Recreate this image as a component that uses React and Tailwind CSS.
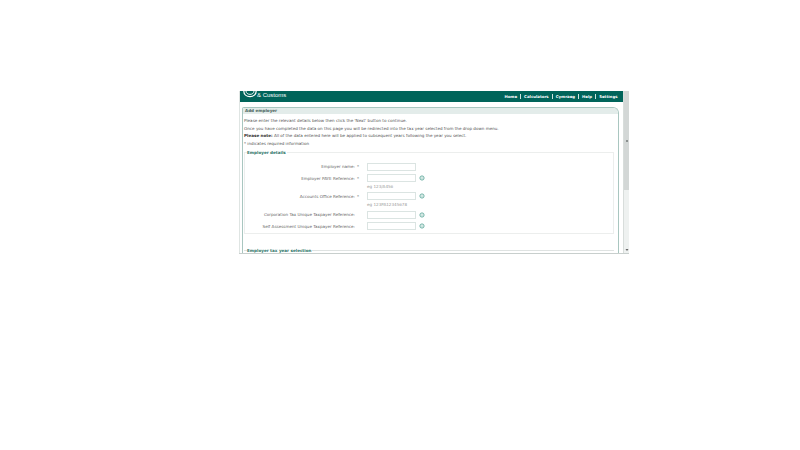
const fields = [
  { label: "Employer name:", required: true, help: false, h: "h-[11.5px]" },
  { label: "Employer PAYE Reference:", required: true, help: true, hint: "eg 123/A456", h: "h-[18px]" },
  { label: "Accounts Office Reference:", required: true, help: true, hint: "eg 123PA12345678", h: "h-[18.5px]" },
  { label: "Corporation Tax Unique Taxpayer Reference:", required: false, help: true, h: "h-[11.5px]" },
  { label: "Self Assessment Unique Taxpayer Reference:", required: false, help: true, h: "h-[11.5px]" },
];
const navItems = ["Home", "Calculators", "Cymraeg", "Help", "Settings"];

const HelpIcon = () => (
  <svg width="6" height="6" viewBox="0 0 12 12" className="shrink-0">
    <circle cx="6" cy="6" r="4.2" fill="#f1f8f6" stroke="#5fa89b" strokeWidth="1.8" />
    <circle cx="6" cy="6" r="1.1" fill="#5fa89b" />
  </svg>
);

const FieldRow = ({ field }) => (
  <div className="flex flex-col">
    <div className="flex items-center h-[8px]">
      <div className="w-[110px] text-right text-[#666] whitespace-nowrap">{field.label}</div>
      <div className="w-[12px] pl-[2px] text-[#666]">{field.required ? "*" : ""}</div>
      <div className="w-[49px] h-[8px] border border-[#dbe4e2] bg-white shrink-0" />
      {field.help && (
        <div className="ml-[3px]">
          <HelpIcon />
        </div>
      )}
    </div>
    {field.hint && <div className="ml-[122px] mt-[1px] leading-[7px] text-[#999]">{field.hint}</div>}
  </div>
);

export default function App() {
  return (
    <div className="w-[800px] h-[450px] bg-white pt-[91px] pl-[239px] font-['DejaVu_Sans',sans-serif] text-[4.1px] leading-[7.5px]">
      <div className="flex w-[390px] h-[163px] border-b border-[#c8cfcd] overflow-hidden">
        <div className="flex-1 flex flex-col min-w-0 border-l border-[#dfe5e3]">
          {/* Header */}
          <div className="h-[11px] bg-[#00645a] flex items-center justify-between pl-[3px] pr-[2.5px] overflow-hidden shrink-0">
            <div className="flex items-center text-white">
              <svg width="14" height="11" viewBox="0 0 14 11" className="shrink-0">
                <path d="M0.8 0 C0.8 3.5 3.5 5.6 7 5.6 C10.5 5.6 13.2 3.5 13.2 0" fill="none" stroke="#fff" strokeWidth="1.2" />
                <path d="M3 0 C3 2 4.8 3.4 7 3.4 C9.2 3.4 11 2 11 0" fill="none" stroke="#fff" strokeWidth="0.9" />
              </svg>
              <span className="font-['Liberation_Sans',sans-serif] text-[6px] leading-[8px] -mt-[3px] whitespace-nowrap">&amp; Customs</span>
            </div>
            <div className="flex items-center font-bold text-white text-[3.9px]">
              {navItems.map((item, i) => (
                <div key={item} className={`px-[3px] leading-[5px] ${i > 0 ? "border-l border-[#cfe3df]" : ""}`}>
                  {item}
                </div>
              ))}
            </div>
          </div>

          {/* Panel */}
          <div className="flex-1 min-h-0 pt-[5px] pr-[4px] pl-[2px] bg-white">
            <div className="h-full border border-b-0 border-[#a9c6c0] rounded-tr-[6px] rounded-tl-[2px] overflow-hidden">
              <div className="h-[6px] mb-[1px] bg-[#e3ecea] pl-[2px] flex items-center font-bold text-[#4a6560]">Add employer</div>
              <div className="pl-[1px] pt-[2.25px] text-[#555]">
                <p>Please enter the relevant details below then click the 'Next' button to continue.</p>
                <p>Once you have completed the data on this page you will be redirected into the tax year selected from the drop down menu.</p>
                <p>
                  <b className="text-[#333]">Please note:</b> All of the data entered here will be applied to subsequent years following the year you select.
                </p>
                <p>* indicates required information</p>
              </div>

              <div className="ml-[1px] mr-[4px] mt-[5px] border border-[#eceeed] h-[81.5px]">
                <div className="font-bold text-[#2d7468] -mt-[4px] ml-[2px] w-fit bg-white pr-[1px]">Employer details</div>
                <div className="mt-[6px] flex flex-col">
                  {fields.map((field) => (
                    <div key={field.label} className={field.h}>
                      <FieldRow field={field} />
                    </div>
                  ))}
                </div>
              </div>

              <div className="ml-[1px] mr-[4px] mt-[16.5px] border-t border-[#dfe3e2]">
                <div className="font-bold text-[#2d7468] -mt-[4px] ml-[3px] w-fit bg-white pr-[1px]">Employer tax year selection</div>
              </div>
            </div>
          </div>
        </div>

        {/* Scrollbar */}
        <div className="w-[6px] bg-[#eef1f0] border-l border-[#d8dddb] flex flex-col items-center shrink-0">
          <div className="w-full h-[99px] bg-[#d3d7d6] flex items-center justify-center">
            <div className="w-[2px] h-[2px] bg-[#8b908f]" />
          </div>
          <div className="flex-1" />
          <svg width="4" height="4" viewBox="0 0 4 4" className="mb-[1px]">
            <path d="M0.5 1 L3.5 1 L2 3 Z" fill="#666" />
          </svg>
        </div>
      </div>
    </div>
  );
}
